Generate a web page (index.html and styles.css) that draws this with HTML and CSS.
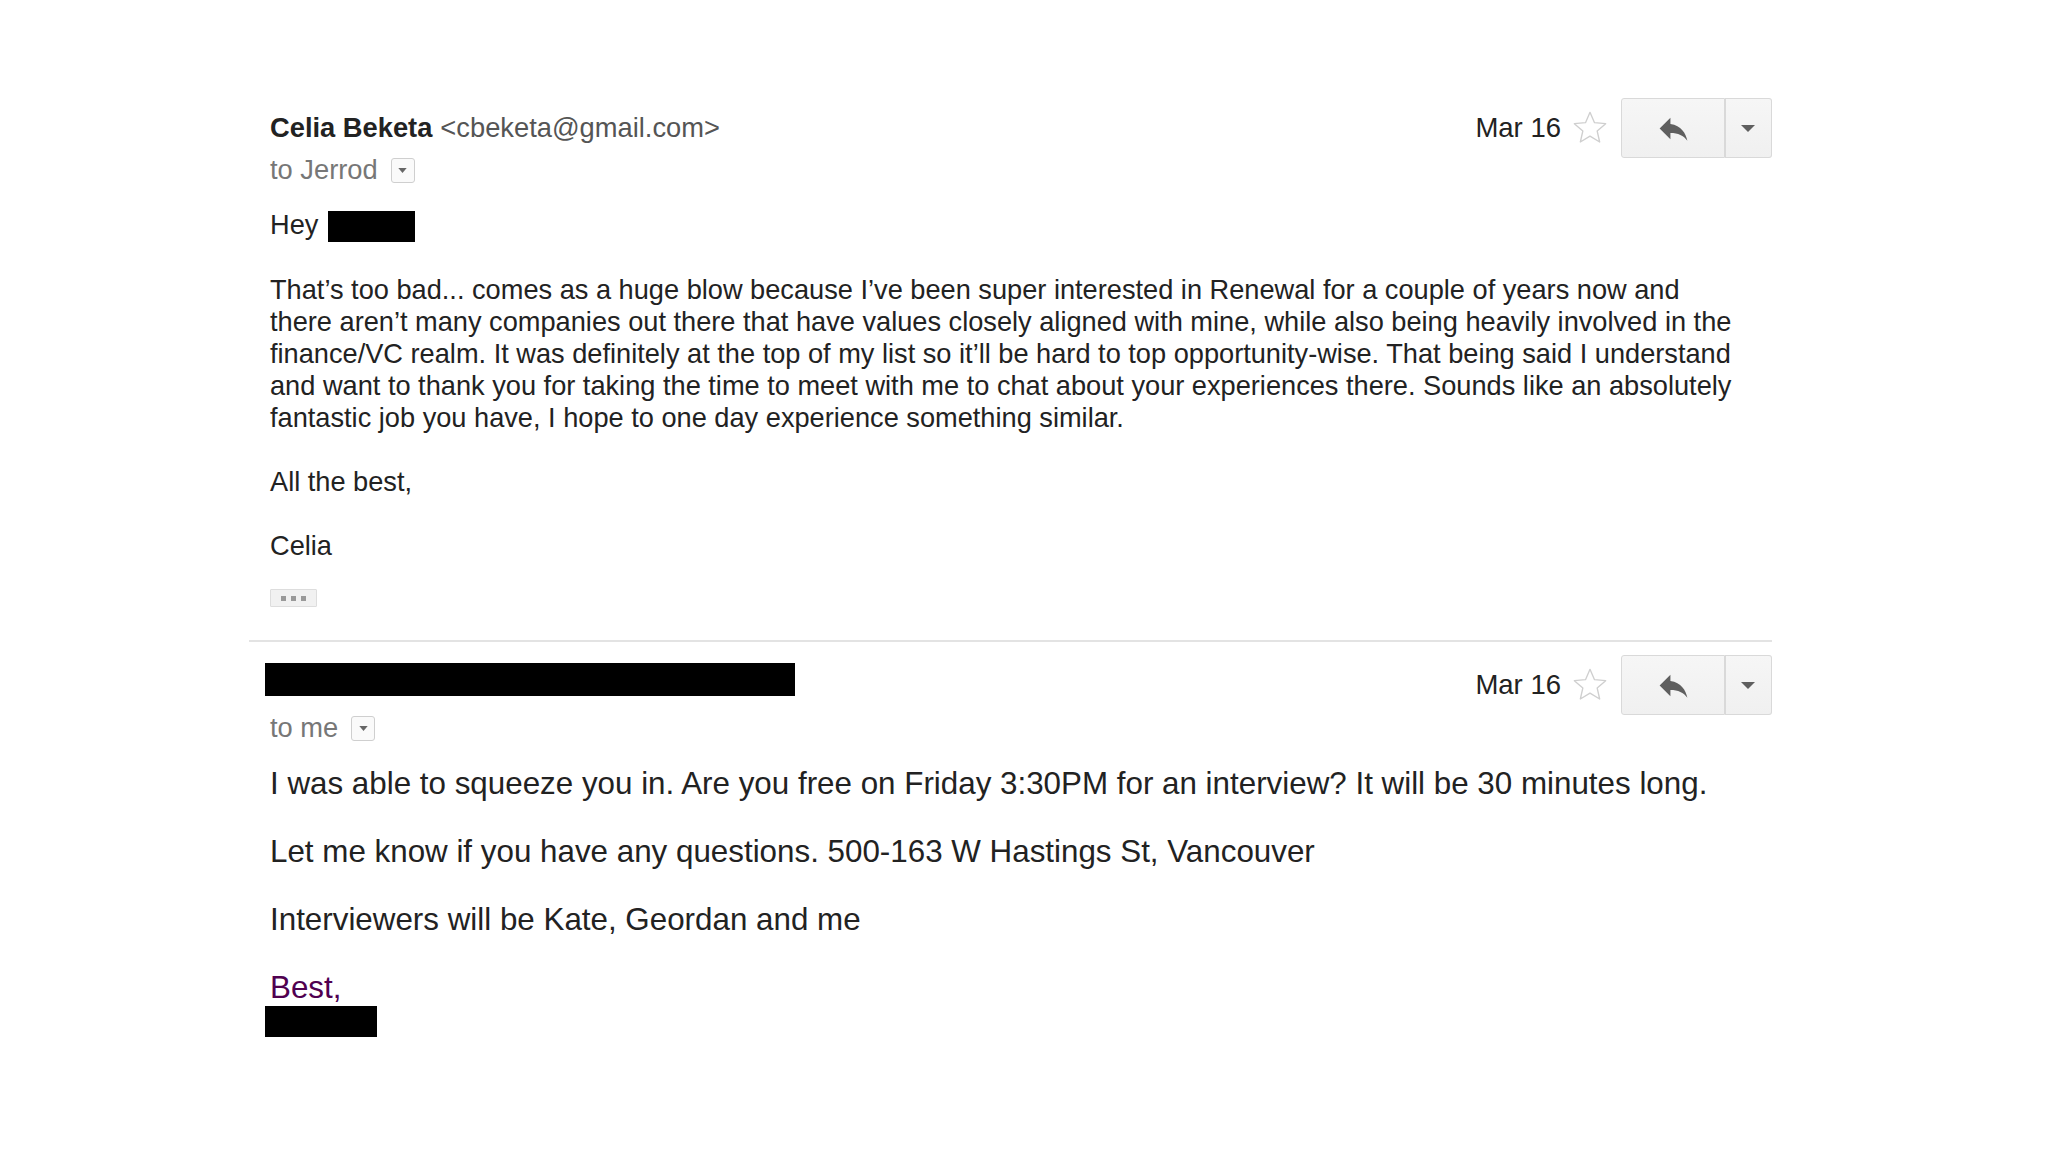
FILE: index.html
```html
<!DOCTYPE html>
<html>
<head>
<meta charset="utf-8">
<link rel="stylesheet" href="styles.css">
</head>
<body>
<div class="thread">
  <div class="message first">
    <div class="head">
      <div class="who">
        <div class="from"><span class="name">Celia Beketa</span><span class="addr">&lt;cbeketa@gmail.com&gt;</span></div>
        <div class="to">to Jerrod <span class="mini-dd"><svg width="9" height="5" viewBox="0 0 10 6"><path d="M0 0h10L5 6z" fill="#666"/></svg></span></div>
      </div>
      <div class="actions">
        <span class="date">Mar 16</span>
        <svg class="star" width="40" height="40" viewBox="0 0 24 24"><path d="M12 2.6l2.7 6.2 6.7.6-5.1 4.4 1.5 6.6L12 16.9l-5.8 3.5 1.5-6.6-5.1-4.4 6.7-.6z" fill="none" stroke="#cfcfcf" stroke-width="0.8" stroke-linejoin="round"/></svg>
        <div class="btns">
          <span class="btn reply"><svg width="37" height="37" viewBox="0 0 24 24"><path d="M10 9V5l-7 7 7 7v-4.1c5 0 8.5 1.6 11 5.1-1-5-4-10-11-11z" fill="#5f5f5f"/></svg></span>
          <span class="btn more"><svg width="14" height="7" viewBox="0 0 14 7"><path d="M0 0h14L7 7z" fill="#5f5f5f"/></svg></span>
        </div>
      </div>
    </div>
    <div class="body small">
      <p>Hey <span class="redact hey"></span></p>
      <p>That’s too bad... comes as a huge blow because I’ve been super interested in Renewal for a couple of years now and there aren’t many companies out there that have values closely aligned with mine, while also being heavily involved in the finance/VC realm. It was definitely at the top of my list so it’ll be hard to top opportunity-wise. That being said I understand and want to thank you for taking the time to meet with me to chat about your experiences there. Sounds like an absolutely fantastic job you have, I hope to one day experience something similar.</p>
      <p>All the best,</p>
      <p>Celia</p>
      <span class="dots"><i></i><i></i><i></i></span>
    </div>
  </div>
  <div class="message second">
    <div class="head">
      <div class="who">
        <div class="from"><span class="redact sender"></span></div>
        <div class="to">to me <span class="mini-dd"><svg width="9" height="5" viewBox="0 0 10 6"><path d="M0 0h10L5 6z" fill="#666"/></svg></span></div>
      </div>
      <div class="actions">
        <span class="date">Mar 16</span>
        <svg class="star" width="40" height="40" viewBox="0 0 24 24"><path d="M12 2.6l2.7 6.2 6.7.6-5.1 4.4 1.5 6.6L12 16.9l-5.8 3.5 1.5-6.6-5.1-4.4 6.7-.6z" fill="none" stroke="#cfcfcf" stroke-width="0.8" stroke-linejoin="round"/></svg>
        <div class="btns">
          <span class="btn reply"><svg width="37" height="37" viewBox="0 0 24 24"><path d="M10 9V5l-7 7 7 7v-4.1c5 0 8.5 1.6 11 5.1-1-5-4-10-11-11z" fill="#5f5f5f"/></svg></span>
          <span class="btn more"><svg width="14" height="7" viewBox="0 0 14 7"><path d="M0 0h14L7 7z" fill="#5f5f5f"/></svg></span>
        </div>
      </div>
    </div>
    <div class="body large">
      <p>I was able to squeeze you in. Are you free on Friday 3:30PM for an interview? It will be 30 minutes long.</p>
      <p>Let me know if you have any questions. 500-163 W Hastings St, Vancouver</p>
      <p>Interviewers will be Kate, Geordan and me</p>
      <div class="sig"><span class="best">Best,</span><span class="redact signame"></span></div>
    </div>
  </div>
</div>
</body>
</html>
```

FILE: styles.css
```css
html, body {
  margin: 0;
  padding: 0;
  background: #ffffff;
}
body {
  font-family: "Liberation Sans", Arial, Helvetica, sans-serif;
  color: #222222;
  width: 2048px;
  height: 1152px;
  overflow: hidden;
}
.thread {
  margin-left: 249px;
  width: 1523px;
  padding-top: 98px;
}
.message.first {
  padding-bottom: 33px;
  border-bottom: 2px solid #e3e3e3;
}
.message.second {
  padding-top: 13px;
}
.head {
  display: flex;
  justify-content: space-between;
  align-items: flex-start;
}
.who {
  padding-left: 21px;
}
.from {
  height: 60px;
  display: flex;
  align-items: center;
  font-size: 27.3px;
  white-space: nowrap;
}
.name {
  font-weight: bold;
  color: #222;
}
.addr {
  color: #555;
  margin-left: 8px;
}
.to {
  height: 24px;
  display: flex;
  align-items: center;
  font-size: 27.3px;
  color: #777;
}
.second .to {
  margin-top: 1px;
}
.mini-dd {
  display: inline-flex;
  align-items: center;
  justify-content: center;
  width: 22px;
  height: 23px;
  margin-left: 13px;
  border: 1px solid #cfcfcf;
  border-radius: 3px;
  background: #fafafa;
}
.actions {
  display: flex;
  align-items: center;
  height: 60px;
}
.date {
  font-size: 27.5px;
  color: #222;
  margin-right: 9px;
}
.star {
  margin-right: 11px;
}
.btns {
  display: flex;
  height: 60px;
}
.btn {
  display: flex;
  align-items: center;
  justify-content: center;
  height: 58px;
  border: 1px solid #d9d9d9;
  background: linear-gradient(#f6f6f6, #f0f0f0);
}
.btn.reply {
  width: 102px;
  border-radius: 3px 0 0 3px;
}
.btn.more {
  width: 46px;
  border-left: none;
  border-radius: 0 3px 3px 0;
  box-shadow: inset 1px 0 0 #d9d9d9;
}
.body {
  padding-left: 21px;
}
.body p {
  margin: 0;
}
.body.small {
  padding-top: 27px;
  font-size: 27.2px;
  line-height: 32px;
  width: 1476px;
}
.body.small p {
  margin-bottom: 32px;
}
.body.small p:nth-last-of-type(1) {
  margin-bottom: 27px;
}
.redact {
  display: inline-block;
  background: #000;
  vertical-align: middle;
}
.redact.hey {
  width: 87px;
  height: 31px;
  margin-left: 2px;
}
.redact.sender {
  width: 530px;
  height: 33px;
  margin-left: -5px;
  margin-top: -12px;
}
.dots {
  display: flex;
  gap: 5px;
  align-items: center;
  justify-content: center;
  width: 45px;
  height: 16px;
  border: 1px solid #dddddd;
  background: #f1f1f1;
  border-radius: 1px;
}
.dots i {
  display: block;
  width: 5px;
  height: 5px;
  background: #999;
}
.body.large {
  padding-top: 26px;
  font-size: 31.35px;
  line-height: 36px;
}
.body.large p {
  margin-bottom: 32px;
}
.sig {
  display: flex;
  flex-direction: column;
  align-items: flex-start;
}
.best {
  color: #500050;
}
.redact.signame {
  width: 112px;
  height: 31px;
  margin-left: -5px;
}
```
